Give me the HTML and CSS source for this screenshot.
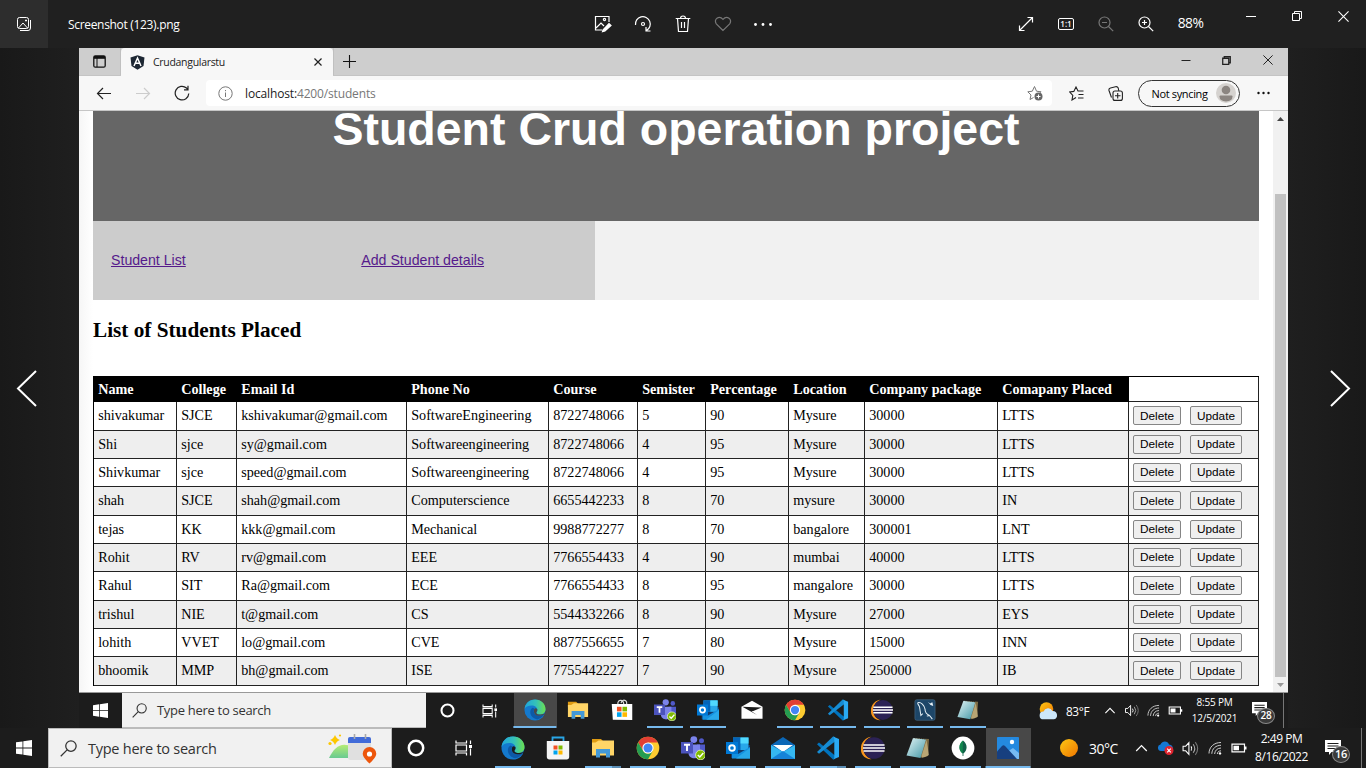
FILE: index.html
```html
<!DOCTYPE html>
<html lang="en">
<head>
<meta charset="utf-8">
<title>Photos - Screenshot (123).png</title>
<link rel="stylesheet" href="styles.css">
</head>
<body>
<svg class="defs" width="0" height="0">
  <defs>
    <linearGradient id="gEdge" x1="0" y1="0" x2="1" y2="0"><stop offset="0" stop-color="#1fa5dc"/><stop offset=".55" stop-color="#35c1b8"/><stop offset="1" stop-color="#6ce04e"/></linearGradient>
    <linearGradient id="gSun" x1="0" y1="0" x2="1" y2="1"><stop offset="0" stop-color="#ffc814"/><stop offset="1" stop-color="#ee7500"/></linearGradient>
    <linearGradient id="gNote" x1="0" y1="0" x2="1" y2="1"><stop offset="0" stop-color="#e4f6f7"/><stop offset="1" stop-color="#4196a5"/></linearGradient>
    <linearGradient id="gHill" x1="0" y1="0" x2="0" y2="1"><stop offset="0" stop-color="#b5ec74"/><stop offset="1" stop-color="#69ca91"/></linearGradient>
  </defs>
  <symbol id="win" viewBox="0 0 16 16"><path fill="#fff" d="M0 2.3 6.5 1.4V7.6H0ZM7.3 1.3 16 0V7.6H7.3ZM0 8.4H6.5V14.6L0 13.7ZM7.3 8.4H16V16L7.3 14.7Z"/></symbol>
  <symbol id="search" viewBox="0 0 16 16"><g fill="none" stroke="currentColor" stroke-width="1.2"><circle cx="10.3" cy="5.7" r="4.9"/><path d="M6.7 9.3.7 15.3"/></g></symbol>
  <symbol id="cortana" viewBox="0 0 16 16"><circle cx="8" cy="8" r="6.4" fill="none" stroke="#fff" stroke-width="2.2"/></symbol>
  <symbol id="taskview" viewBox="0 0 18 16"><path fill="none" stroke="#fff" stroke-width="1.2" d="M1 .5V3H11.500V.5M1 15.500V13H11.500V15.500M1 5H11.500V11H1ZM15.500 .5V4M15.500 8.500V15.500"/><path fill="#fff" d="M14 5h3v3h-3z"/></symbol>
  <symbol id="edge" viewBox="0 0 24 24"><circle cx="12" cy="12" r="11.500" fill="#1479cd"/><path fill="url(#gEdge)" d="M.6 11C1 5 5.600.5 12 .5c7 0 11.500 5 11.500 10.400 0 4-3 6-6 6-2.500 0-4-.8-4-1.600 0-.6 1.100-1.100 1.100-3.200 0-3-2.700-5-6.200-5C4.600 7.100 1.500 8.600.6 11Z"/><path fill="#0d59a7" d="M9.500 9.500C5 12 6 20.500 14.500 22.300c3.500-.7 6-3 7.300-5.300-3.500 2-9 1.500-10.600-1.500-1-2-.6-3.700.2-5Z"/><path class="edge-gap" d="M11.300 11c-1.500 3.700.6 7.500 5.500 7.300 2.700-.1 4.800-1 5.500-1.600.5-.4.1-.7-.4-.5-3.400 1.300-8.500.8-8.500-1.300 0-.8 1.200-1.500 1.200-3.200 0-.9-2.200-2.600-3.300-.7ZM22.600 15.300 25 11v9l-3-1.500Z"/></symbol>
  <symbol id="store" viewBox="0 0 24 24"><path fill="none" stroke="#29a5e6" stroke-width="1.800" d="M6.500 5.500V1.500h11V5"/><path fill="#f5f5f5" d="M.8 5h22.400v16c0 1.500-1 2.500-2.500 2.500H3.300C1.800 23.500.8 22.500.8 21Z"/><path fill="#f25022" d="M7.500 9.500h4v4h-4z"/><path fill="#7fba00" d="M12.500 9.500h4v4h-4z"/><path fill="#00a4ef" d="M7.500 14.500h4v4h-4z"/><path fill="#ffb900" d="M12.500 14.500h4v4h-4z"/></symbol>
  <symbol id="store10" viewBox="0 0 24 24"><path fill="none" stroke="#ddd" stroke-width="1.300" d="M7.500 6.500C7 2.500 9 1 11 1.500S14 4 14 6.500M11 4.500C11.500 1.500 14 .5 16 2s1 3 1 4.500"/><path fill="#fff" d="M.8 5.500h22.400v17.300L2 22.500Z"/><path fill="#f25022" d="M6.500 8.500h5v5h-5z"/><path fill="#7fba00" d="M12.500 8.500h5v5h-5z"/><path fill="#00a4ef" d="M6.500 14.500h5v5h-5z"/><path fill="#ffb900" d="M12.500 14.500h5v5h-5z"/></symbol>
  <symbol id="folder" viewBox="0 0 24 24"><path fill="#df9b13" d="M1 3h9l2.500 2.500H22V9H1Z"/><path fill="#ffd567" d="M1 6.500h3.500L7.500 4.500H23V19.500H1Z"/><path fill="#4399d8" d="M5 13h14v8.500h-4V17.500H9v4H5Z"/></symbol>
  <symbol id="chrome" viewBox="0 0 24 24"><circle cx="12" cy="12" r="11.300" fill="#fdcb30"/><path fill="#e23f33" d="M2.200 6.400A11.300 11.300 0 0 1 21.800 6.400H12L7.200 14.800Z"/><path fill="#259c51" d="M2.200 6.400A11.300 11.300 0 0 0 12 23.300L16.900 14.800A5.600 5.600 0 0 1 7.100 14.800Z"/><circle cx="12" cy="12" r="5.600" fill="#fff"/><circle cx="12" cy="12" r="4.500" fill="#4285f4"/></symbol>
  <symbol id="teams" viewBox="0 0 24 24"><circle cx="20.500" cy="4.800" r="2.500" fill="#5059c9"/><circle cx="12.800" cy="3.600" r="3.400" fill="#7b83eb"/><path fill="#5059c9" d="M16 8.500h8v7a4 4 0 0 1-8 2Z"/><path fill="#7b83eb" d="M7.500 8.500h11.500v8.500c0 7-11.500 7-11.500 0Z"/><path fill="#4b53bc" d="M0 6h12v11.500H0Z"/><path fill="none" stroke="#fff" stroke-width="1.900" d="M3 8.800h6M6 8.800V15"/><circle cx="19.500" cy="19" r="4.900" fill="#7fba00" stroke="#e6f5c5" stroke-width=".8"/><path fill="none" stroke="#fff" stroke-width="1.500" d="m16.800 19 2 2 3.500-4"/></symbol>
  <symbol id="outlook" viewBox="0 0 24 24"><path fill="#123b6d" d="M5 9h19v13H5Z"/><path fill="#28a8ea" d="M7 1.500h15.500V14H7Z"/><path fill="#0364b8" d="M7 1.500h7.500V14H7Z"/><path fill="#50d9ff" d="M14.500 1.500h8v6h-8Z"/><path fill="#1490df" d="m24 11-12 7-6-3.500V22.500h18Z"/><path fill="#28a8ea" d="m24 12-14 10.500h14Z"/><path fill="#0078d4" d="M0 6h12v12H0Z"/><circle cx="6" cy="12" r="2.800" fill="none" stroke="#fff" stroke-width="1.900"/></symbol>
  <symbol id="mail" viewBox="0 0 24 24"><path fill="#0b67b7" d="M0 9 12 1l12 8v14H0Z"/><path fill="#fff" d="M2 9h20l-10 7Z"/><path fill="#35b8f1" d="m0 9 12 7 12-7v14H0Z"/><path fill="#1683d8" d="M0 23 12 15l12 8Z"/></symbol>
  <symbol id="mail10" viewBox="0 0 24 24"><path fill="#fff" d="M.5 8.500 12 2 23.500 8.500v13H.5Z"/><path fill="#1c1c1c" d="M1.500 8.500 22.500 9.300 13.500 13l-2 .3 6 4.200Z"/></symbol>
  <symbol id="vscode" viewBox="0 0 24 24"><path fill="#0073bd" d="M1 8.200 3 6.500 19 19.500V23L17 23.500Z"/><path fill="#168cd3" d="M1 16 17 .5l2 .5v4.500L3 17.700Z"/><path fill="#2aaaf3" d="m17 .5 6 2.500v18l-6 2.500c1-.5 1.300-1 1.300-2V2.500c0-1-.3-1.500-1.300-2Z"/></symbol>
  <symbol id="eclipse" viewBox="0 0 24 24"><path fill="#f7941e" d="M10.500.8C2 1.500-3 11.500 1.500 18.800c2 3 5.500 4.600 9 4.400C-1 19.500.5 4 10.500.8Z"/><circle cx="13" cy="12" r="10.800" fill="#2c2255"/><path stroke="#fff" stroke-width="1.500" d="M2.500 9h21M2 12h22M2.500 15h21"/></symbol>
  <symbol id="mysql" viewBox="0 0 24 24"><rect x="1" y=".8" width="22" height="22.400" rx="2" fill="#1d4668" stroke="#476b86" stroke-width=".7"/><path fill="none" stroke="#e9f2f7" stroke-width="1.100" d="M4 4c4-1 7 3 8 7 0 3 2 6 5 7l-3 .5M4 4c0 2 1.500 3 2 4.500L7.500 18l2-2M17 18l3 4"/><path fill="#e9f2f7" d="m15 3 2.500 2L20 3.500l1 4-3-1Z"/></symbol>
  <symbol id="notepad" viewBox="0 0 24 24"><path fill="#7c6a42" d="m8 2 15 1-1 17-6 2Z"/><path fill="url(#gNote)" d="M7 2 20 3.500 14.500 22 .5 19.500Z"/><path stroke="#222" stroke-width="1.200" stroke-dasharray="1 1.300" d="m7 1.500 13.500 1.500"/><path fill="#d8c58f" d="m20.500 4 2.500 15-4 2-4 .5Z" opacity=".65"/></symbol>
  <symbol id="mongo" viewBox="0 0 24 24"><circle cx="12" cy="12" r="11.400" fill="#fff"/><path fill="#116149" d="M12 4.500c5 4 4.500 10 .4 13V20h-.8v-2.500C7.500 14.500 7 8.500 12 4.500Z"/><path fill="#13aa52" d="M12 4.500c-5 4-4.500 10-.4 13Z" opacity=".55"/></symbol>
  <symbol id="photos" viewBox="0 0 24 24"><rect x="1" y="1" width="22" height="22" rx="1" fill="#2489df"/><path fill="#77baf2" d="M11 16 17 12l6 5v6H15Z"/><path fill="#173f7f" d="M1 15.500 6 10q1.500-1.500 3 0l12 13H1Z"/><circle cx="16" cy="6" r="2.200" fill="#fff"/></symbol>
  <symbol id="chev" viewBox="0 0 12 8"><path fill="none" stroke="#fff" stroke-width="1.200" d="M.7 7 6 1.500 11.300 7"/></symbol>
  <symbol id="speaker" viewBox="0 0 16 14"><path fill="none" stroke="#fff" d="M1 4.800h2.500L6.500 1.500v11L3.500 9.200H1ZM8.500 5q1.500 2 0 4"/><path fill="none" stroke="#aaa" d="M10.500 3q3 4 0 8"/><path fill="none" stroke="#777" d="M12.500 1q4.500 6 0 12"/></symbol>
  <symbol id="wifi" viewBox="0 0 14 14"><g fill="none" stroke="#ccc" stroke-width="1"><path d="M1 12.500C1 6 6 1.500 13 1.500"/><path d="M3.800 12.800C4 7.500 8 4.300 13 4.300"/><path d="M6.600 13C7 9.500 9 7.200 13 7"/><path d="M9.300 13C9.500 11 10.500 10 13 9.800"/></g><circle cx="12" cy="12.400" r="1.200" fill="#fff"/></symbol>
  <symbol id="battery" viewBox="0 0 16 10"><path fill="none" stroke="#fff" stroke-width="1.200" d="M1 1.200h12.500v7.600H1Z"/><path fill="#fff" d="M2.500 2.700h5.500v4.600H2.500ZM14 3.500h1.500v3H14Z"/></symbol>
  <symbol id="notif" viewBox="0 0 16 16"><path fill="#fff" d="M0 0h16v12H6.500L4 15V12H0Z"/><path stroke="#1c1c1c" stroke-width="1.200" d="M2.500 3.500h11M2.500 6h11M2.500 8.500h11"/></symbol>
  <symbol id="close" viewBox="0 0 10 10"><path fill="none" stroke="currentColor" d="m.4.4 9.200 9.200M9.600.4.4 9.600"/></symbol>
  <symbol id="restore" viewBox="0 0 10 10"><path fill="none" stroke="currentColor" d="M.5 2.500h7v7h-7ZM2.500 2.500v-2h7v7h-2"/></symbol>
  <symbol id="zoomglass" viewBox="0 0 16 16"><g fill="none" stroke="currentColor" stroke-width="1.200"><circle cx="6.500" cy="6.500" r="5.500"/><path d="m10.500 10.500 4.700 4.700M4 6.500h5"/></g></symbol>
</svg>

<div class="desktop">
  <header class="viewer-bar">
    <div class="viewer-home"><svg width="16" height="16" viewBox="0 0 16 16" fill="none" stroke="#fff"><rect x="1.500" y="1.500" width="11" height="11" rx="2"/><path d="M2.500 12 7 7l4.500 5M14.500 4v8q0 2.500-2.500 2.500H4M10 3.500v2M9 4.500h2"/></svg></div>
    <div class="viewer-title">Screenshot (123).png</div>
    <div class="viewer-tools">
      <div class="tool"><svg width="18" height="18" viewBox="0 0 18 18" fill="none" stroke="#fff" stroke-width="1.200"><path d="M8 15H1.500V1.500H15V7M2 13l5-5 3 3"/><circle cx="10.500" cy="4.500" r="1.100"/><path fill="#fff" d="m9 15 6-6.500 2 2L11 16l-2.500.7Z"/></svg></div>
      <div class="tool"><svg width="18" height="18" viewBox="0 0 18 18" fill="none" stroke="#fff" stroke-width="1.200"><path d="M1.500 10A7.400 7.400 0 1 1 12.500 15.500M12 12v4h4.500"/><circle cx="9" cy="9" r="1.500"/></svg></div>
      <div class="tool"><svg width="16" height="18" viewBox="0 0 16 18" fill="none" stroke="#fff" stroke-width="1.200"><path d="M.7 3.500h14.600M5.500 3.500q0-2.500 2.500-2.500t2.500 2.500M2.500 3.500l1 13h9l1-13M6.500 7v6M9.500 7v6"/></svg></div>
      <div class="tool"><svg width="18" height="16" viewBox="0 0 18 16" fill="none" stroke="#777" stroke-width="1.200"><path d="m9 14.500-6.700-6.700C-.8 3.500 5-1 9 3.300 13-1 18.800 3.500 15.700 7.800Z"/></svg></div>
      <div class="tool"><svg width="20" height="6" viewBox="0 0 20 6" fill="#fff"><circle cx="2.500" cy="3.500" r="1.400"/><circle cx="10" cy="3.500" r="1.400"/><circle cx="17.500" cy="3.500" r="1.400"/></svg></div>
    </div>
    <div class="viewer-zoom">
      <div class="tool"><svg width="16" height="16" viewBox="0 0 16 16" fill="none" stroke="#fff" stroke-width="1.200"><path d="M1.500 14.500l13-13M9.500 1.500h5v5M1.500 9.500v5h5"/></svg></div>
      <div class="tool"><span class="ratio">1:1</span></div>
      <div class="tool dim"><svg width="16" height="16"><use href="#zoomglass"/></svg></div>
      <div class="tool"><svg width="16" height="16" viewBox="0 0 16 16"><use href="#zoomglass"/><path stroke="#fff" stroke-width="1.200" d="M6.500 4v5"/></svg></div>
      <div class="percent">88%</div>
    </div>
    <div class="viewer-win">
      <div><svg width="10" height="10" viewBox="0 0 10 10"><path stroke="#fff" d="M0 5.500h10"/></svg></div>
      <div><svg width="10" height="10"><use href="#restore"/></svg></div>
      <div><svg width="11" height="11"><use href="#close"/></svg></div>
    </div>
  </header>

  <main class="viewer">
    <div class="side prev"><svg width="22" height="38" viewBox="0 0 22 38"><path fill="none" stroke="#fff" stroke-width="2" d="M20 2 2 19.500 20 37"/></svg></div>
    <div class="shot">
      <div class="tabs">
        <div class="tab-menu"><svg width="13" height="13" viewBox="0 0 13 13"><rect x=".8" y=".8" width="11.400" height="11.400" rx="1.500" fill="none" stroke="#111" stroke-width="1.300"/><path fill="#111" d="M1 1h11v2.800H1Z"/><path stroke="#111" d="M4 3v9"/></svg></div>
        <div class="tab">
          <svg width="15" height="15" viewBox="0 0 15 15"><path fill="#1d2733" d="M7.500.3 14.500 2.500 13.500 11l-6 3.700-6-3.700L.5 2.500Z"/><path fill="none" stroke="#fff" stroke-width="1.500" d="m4 11 3.500-8L11 11M5.300 8.300h4.400"/></svg>
          <span>Crudangularstu</span>
          <svg class="tab-x" width="8" height="8" viewBox="0 0 10 10"><path fill="none" stroke="#222" stroke-width="1.500" d="m.6.6 8.800 8.800M9.400.6.6 9.400"/></svg>
        </div>
        <div class="tab-new"><svg width="13" height="13" viewBox="0 0 13 13"><path stroke="#111" stroke-width="1.100" d="M0 6.500h13M6.500 0v13"/></svg></div>
        <div class="browser-win">
          <div><svg width="10" height="10" viewBox="0 0 10 10"><path stroke="#222" d="M.5 5.500h9"/></svg></div>
          <div><svg width="9" height="9" viewBox="0 0 10 10"><path fill="none" stroke="#222" stroke-width="1.400" d="M.8 2.500h6.700v6.700H.8ZM2.500 2.500V.8h6.700v6.700H7.500"/></svg></div>
          <div><svg width="10" height="10"><use href="#close"/></svg></div>
        </div>
      </div>
      <div class="toolbar">
        <div class="nav-btn"><svg width="16" height="13" viewBox="0 0 16 13" fill="none" stroke="#222" stroke-width="1.200"><path d="M15 6.500H1.500M7 1 1.500 6.500 7 12"/></svg></div>
        <div class="nav-btn"><svg width="16" height="13" viewBox="0 0 16 13" fill="none" stroke="#ccc" stroke-width="1.200"><path d="M1 6.500h13.500M9 1l5.500 5.500L9 12"/></svg></div>
        <div class="nav-btn"><svg width="16" height="16" viewBox="0 0 16 16" fill="none" stroke="#222" stroke-width="1.200"><path d="M14.800 8.500A6.800 6.800 0 1 1 12.500 3L14 4.500M14 .8v4h-4"/></svg></div>
        <div class="address">
          <svg width="15" height="15" viewBox="0 0 15 15" fill="none" stroke="#777"><circle cx="7.500" cy="7.500" r="6.700"/><path d="M7.500 6.500v4.500M7.500 4v1.200"/></svg>
          <span class="url">localhost:<i>4200/students</i></span>
          <svg class="fav" width="16" height="16" viewBox="0 0 16 16" fill="none" stroke="#777"><path d="M6.500 12.500 3 14.500l1-4.500L.8 6.800l4.500-.6L7.500 1.500l2 4.700 4.500.6-1 1"/><circle cx="11.500" cy="11.500" r="4" fill="#666" stroke="none"/><path stroke="#fff" d="M9.500 11.500h4M11.500 9.500v4"/></svg>
        </div>
        <div class="tb-cell"><svg width="15" height="15" viewBox="0 0 15 15" fill="none" stroke="#222" stroke-width="1.100"><path d="m7 11.500-4 2.500.8-4.700L.8 6l4-.6L7 1l2 4h5.500M9.500 8.500h5M9 12h5.500"/></svg></div>
        <div class="tb-cell"><svg width="15" height="15" viewBox="0 0 15 15" fill="none" stroke="#222" stroke-width="1.100"><rect x="5" y="5" width="9.400" height="9.400" rx="2"/><path d="M3.500 11.500 1 4.500Q.5 2.500 2.500 2L7.500.7Q9.500.3 10.200 2l.6 3M9.700 7v5.500M7 9.700h5.500"/></svg></div>
        <div class="sync"><span>Not syncing</span><svg width="20" height="20" viewBox="0 0 20 20"><circle cx="10" cy="10" r="10" fill="#d5d2cf"/><circle cx="10" cy="7" r="4.300" fill="#8b8581"/><path fill="#8b8581" d="M3.500 13.500q0-1 1-1h11q1 0 1 1 0 4.500-6.500 5-6.500-.5-6.500-5Z"/></svg></div>
        <div class="more"><svg width="13" height="4" viewBox="0 0 13 4" fill="#111"><circle cx="1.500" cy="2" r="1.200"/><circle cx="6.500" cy="2" r="1.200"/><circle cx="11.500" cy="2" r="1.200"/></svg></div>
      </div>

      <div class="page">
        <div class="content">
          <div class="banner"><h1>Student Crud operation project</h1></div>
          <nav class="menu"><div class="links"><a href="#">Student List</a><a href="#">Add Student details</a></div></nav>
          <h2>List of Students Placed</h2>
          <table>
            <colgroup><col class="c83"><col class="c60"><col class="c170"><col class="c142"><col class="c89"><col class="c68"><col class="c83"><col class="c76"><col class="c133"><col class="c131"><col class="c130"></colgroup>
            <thead><tr><th>Name</th><th>College</th><th>Email Id</th><th>Phone No</th><th>Course</th><th>Semister</th><th>Percentage</th><th>Location</th><th>Company package</th><th>Comapany Placed</th><td></td></tr></thead>
            <tbody>
              <tr><td>shivakumar</td><td>SJCE</td><td>kshivakumar@gmail.com</td><td>SoftwareEngineering</td><td>8722748066</td><td>5</td><td>90</td><td>Mysure</td><td>30000</td><td>LTTS</td><td><div class="actions"><button>Delete</button><button>Update</button></div></td></tr>
              <tr><td>Shi</td><td>sjce</td><td>sy@gmail.com</td><td>Softwareengineering</td><td>8722748066</td><td>4</td><td>95</td><td>Mysure</td><td>30000</td><td>LTTS</td><td><div class="actions"><button>Delete</button><button>Update</button></div></td></tr>
              <tr><td>Shivkumar</td><td>sjce</td><td>speed@gmail.com</td><td>Softwareengineering</td><td>8722748066</td><td>4</td><td>95</td><td>Mysure</td><td>30000</td><td>LTTS</td><td><div class="actions"><button>Delete</button><button>Update</button></div></td></tr>
              <tr><td>shah</td><td>SJCE</td><td>shah@gmail.com</td><td>Computerscience</td><td>6655442233</td><td>8</td><td>70</td><td>mysure</td><td>30000</td><td>IN</td><td><div class="actions"><button>Delete</button><button>Update</button></div></td></tr>
              <tr><td>tejas</td><td>KK</td><td>kkk@gmail.com</td><td>Mechanical</td><td>9988772277</td><td>8</td><td>70</td><td>bangalore</td><td>300001</td><td>LNT</td><td><div class="actions"><button>Delete</button><button>Update</button></div></td></tr>
              <tr><td>Rohit</td><td>RV</td><td>rv@gmail.com</td><td>EEE</td><td>7766554433</td><td>4</td><td>90</td><td>mumbai</td><td>40000</td><td>LTTS</td><td><div class="actions"><button>Delete</button><button>Update</button></div></td></tr>
              <tr><td>Rahul</td><td>SIT</td><td>Ra@gmail.com</td><td>ECE</td><td>7766554433</td><td>8</td><td>95</td><td>mangalore</td><td>30000</td><td>LTTS</td><td><div class="actions"><button>Delete</button><button>Update</button></div></td></tr>
              <tr><td>trishul</td><td>NIE</td><td>t@gmail.com</td><td>CS</td><td>5544332266</td><td>8</td><td>90</td><td>Mysure</td><td>27000</td><td>EYS</td><td><div class="actions"><button>Delete</button><button>Update</button></div></td></tr>
              <tr><td>lohith</td><td>VVET</td><td>lo@gmail.com</td><td>CVE</td><td>8877556655</td><td>7</td><td>80</td><td>Mysure</td><td>15000</td><td>INN</td><td><div class="actions"><button>Delete</button><button>Update</button></div></td></tr>
              <tr><td>bhoomik</td><td>MMP</td><td>bh@gmail.com</td><td>ISE</td><td>7755442227</td><td>7</td><td>90</td><td>Mysure</td><td>250000</td><td>IB</td><td><div class="actions"><button>Delete</button><button>Update</button></div></td></tr>
            </tbody>
          </table>
        </div>
        <div class="scrollbar">
          <svg width="7" height="4" viewBox="0 0 7 4"><path fill="#444" d="M0 4 3.500 0 7 4Z"/></svg>
          <div class="thumb"></div>
          <svg width="7" height="4" viewBox="0 0 7 4"><path fill="#999" d="M0 0h7L3.500 4Z"/></svg>
        </div>
      </div>

      <div class="taskbar inner">
        <div class="start"><svg width="15" height="15"><use href="#win"/></svg></div>
        <div class="searchbox"><svg width="15" height="15"><use href="#search"/></svg><span>Type here to search</span></div>
        <div class="sys"><svg width="15" height="15"><use href="#cortana"/></svg></div>
        <div class="sys tv"><svg width="16" height="14"><use href="#taskview"/></svg></div>
        <div class="apps">
          <div class="app open active"><svg><use href="#edge"/></svg></div>
          <div class="app"><svg><use href="#folder"/></svg></div>
          <div class="app"><svg><use href="#store10"/></svg></div>
          <div class="app open"><svg><use href="#teams"/></svg></div>
          <div class="app open"><svg><use href="#outlook"/></svg></div>
          <div class="app"><svg><use href="#mail10"/></svg></div>
          <div class="app open"><svg><use href="#chrome"/></svg></div>
          <div class="app open"><svg><use href="#vscode"/></svg></div>
          <div class="app open"><svg><use href="#eclipse"/></svg></div>
          <div class="app open"><svg><use href="#mysql"/></svg></div>
          <div class="app open"><svg><use href="#notepad"/></svg></div>
        </div>
        <div class="tray">
          <div class="weather"><svg width="20" height="18" viewBox="0 0 20 18"><circle cx="8.500" cy="7" r="6.800" fill="url(#gSun)"/><path fill="#cce7fa" d="M5.500 17.300a3.900 3.900 0 0 1 0-7.800 5 5 0 0 1 9-.6 4.300 4.300 0 0 1 1.500 8.400Z"/></svg></div>
          <div class="temp">83°F</div>
          <div class="t"><svg width="12" height="7"><use href="#chev"/></svg></div>
          <div class="t"><svg width="16" height="13"><use href="#speaker"/></svg></div>
          <div class="t"><svg width="13" height="13"><use href="#wifi"/></svg></div>
          <div class="t"><svg width="15" height="9"><use href="#battery"/></svg></div>
          <div class="clock"><div>8:55 PM</div><div>12/5/2021</div></div>
          <div class="notice"><svg width="15" height="15"><use href="#notif"/></svg><span class="badge">28</span></div>
          <div class="peek"></div>
        </div>
      </div>
    </div>
    <div class="side next"><svg width="22" height="38" viewBox="0 0 22 38"><path fill="none" stroke="#fff" stroke-width="2" d="m2 2 18 17.500L2 37"/></svg></div>
  </main>

  <footer class="taskbar outer">
    <div class="start"><svg width="16" height="16"><use href="#win"/></svg></div>
    <div class="searchbox"><svg width="17" height="17"><use href="#search"/></svg><span>Type here to search</span>
      <svg class="highlight" width="50" height="30" viewBox="0 0 50 30"><path fill="url(#gHill)" d="M1 24C6 13 14 7 24 13v11Z"/><path fill="#fdc700" d="M7 1q1.500 4 5 5-3.500 1-5 5-1.500-4-5-5 3.500-1 5-5Z"/><circle cx="12" cy="1.500" r="1.100" fill="#fdc700"/><circle cx="2" cy="9.500" r="1.600" fill="#fdc700"/><rect x="20" y="3" width="23" height="23" rx="2.500" fill="#e0e0e0"/><path fill="#416bd8" d="M20 9V5q0-2 2-2h19q2 0 2 2v4Z"/><path stroke="#aaa" stroke-width="1.600" d="M26.500 0v5M37.500 0v5"/><path fill="#ed560c" d="M41.500 13a6.800 6.800 0 0 1 6.800 6.800c0 4-6.800 9.700-6.800 9.700s-6.800-5.700-6.800-9.700a6.800 6.800 0 0 1 6.800-6.800Z"/><circle cx="41.500" cy="20" r="2.600" fill="#fff"/></svg>
    </div>
    <div class="sys"><svg width="18" height="18"><use href="#cortana"/></svg></div>
    <div class="sys tv"><svg width="18" height="16"><use href="#taskview"/></svg></div>
    <div class="apps">
      <div class="app open"><svg><use href="#edge"/></svg></div>
      <div class="app"><svg><use href="#store"/></svg></div>
      <div class="app open multi"><svg><use href="#folder"/></svg></div>
      <div class="app open"><svg><use href="#chrome"/></svg></div>
      <div class="app open"><svg><use href="#teams"/></svg></div>
      <div class="app open"><svg><use href="#outlook"/></svg></div>
      <div class="app open"><svg><use href="#mail"/></svg></div>
      <div class="app open multi"><svg><use href="#vscode"/></svg></div>
      <div class="app open"><svg><use href="#eclipse"/></svg></div>
      <div class="app open"><svg><use href="#notepad"/></svg></div>
      <div class="app open"><svg><use href="#mongo"/></svg></div>
      <div class="app open active"><svg><use href="#photos"/></svg></div>
    </div>
    <div class="tray">
      <div class="weather"><svg width="18" height="18" viewBox="0 0 18 18"><circle cx="9" cy="9" r="9" fill="url(#gSun)"/></svg></div>
      <div class="temp">30°C</div>
      <div class="t"><svg width="13" height="8"><use href="#chev"/></svg></div>
      <div class="t"><svg width="17" height="14" viewBox="0 0 17 14"><path fill="#1478d4" d="M4 10a3.300 3.300 0 0 1-.5-6.500C5-.5 11-.5 12 3.500c3.500.3 4.500 3 3.500 6.500Z"/><circle cx="12" cy="9.500" r="4.500" fill="#e0242f"/><path stroke="#fff" stroke-width="1.200" d="m10.200 7.700 3.600 3.600m0-3.600-3.600 3.600"/></svg></div>
      <div class="t"><svg width="17" height="15"><use href="#speaker"/></svg></div>
      <div class="t"><svg width="14" height="14"><use href="#wifi"/></svg></div>
      <div class="t"><svg width="16" height="10"><use href="#battery"/></svg></div>
      <div class="clock"><div>2:49 PM</div><div>8/16/2022</div></div>
      <div class="notice"><svg width="16" height="16"><use href="#notif"/></svg><span class="badge">16</span></div>
      <div class="peek"></div>
    </div>
  </footer>
</div>
</body>
</html>
```

FILE: styles.css
```css
* { box-sizing: border-box; }
body { margin: 0; overflow: hidden; font-family: "Open Sans", "Noto Sans", sans-serif; }
svg { display: block; flex: none; }
.defs { position: absolute; }
.edge-gap { fill: var(--gap, #1c1c1c); }
.desktop { width: 1366px; height: 768px; display: flex; flex-direction: column; background: #1a1a1a; }

/* photo viewer title bar */
.viewer-bar { height: 48px; display: flex; background: #202020; color: #fff; }
.viewer-home { width: 48px; display: flex; align-items: center; justify-content: center; background: #2d2d2d; }
.viewer-title { width: 535px; padding-left: 20px; line-height: 49px; font-size: 12px; letter-spacing: -.32px; white-space: nowrap; }
.viewer-tools { width: 423px; display: flex; }
.viewer-zoom { width: 222px; display: flex; }
.tool { width: 40px; display: flex; align-items: center; justify-content: center; }
.dim { color: #777; }
.ratio { width: 16px; height: 12px; border: 1px solid #fff; border-radius: 2px; font-size: 8px; line-height: 9.500px; font-weight: 600; text-align: center; }
.percent { width: 49px; text-align: center; font-size: 13.800px; letter-spacing: -.5px; line-height: 46px; }
.viewer-win { display: flex; height: 32px; }
.viewer-win div { width: 46px; display: flex; align-items: center; justify-content: center; }

.viewer { height: 680px; display: flex; }
.side { display: flex; align-items: center; }
.prev { width: 79px; padding-left: 16px; background: linear-gradient(to right, #191919, #1f1f1f); }
.next { width: 78px; padding-left: 41px; background: linear-gradient(to right, #1f1f1f, #191919); }
.shot { width: 1209px; display: flex; flex-direction: column; }

/* browser chrome */
.tabs { height: 28px; display: flex; background: #cecece; border-bottom: 1px solid #c4c4c4; color: #222; }
.tab-menu { width: 42px; display: flex; align-items: center; justify-content: center; border-right: 1px solid #c0c0c0; }
.tab { width: 212px; height: 28px; display: flex; align-items: center; padding: 0 11px 0 9px; gap: 8px; background: #f7f7f7; border-radius: 4px 4px 0 0; font-size: 10.500px; }
.tab span { letter-spacing: -.3px; }
.tab-x { margin-left: auto; }
.tab-new { width: 31px; display: flex; align-items: center; justify-content: center; border-left: 1px solid #c0c0c0; }
.browser-win { margin-left: auto; display: flex; }
.browser-win div { width: 40.700px; display: flex; align-items: center; justify-content: center; padding-bottom: 3px; }
.toolbar { height: 35px; display: flex; align-items: center; padding-left: 5px; background: #f7f7f7; border-bottom: 1px solid #c6c6c6; }
.nav-btn { width: 39px; display: flex; justify-content: center; }
.address { width: 846px; height: 26px; margin-left: 5px; padding: 0 9px 0 12px; display: flex; align-items: center; background: #fff; border-radius: 4px; }
.url { margin-left: 12px; font-size: 12px; letter-spacing: -.15px; color: #222; }
.url i { font-style: normal; color: #777; }
.fav { margin-left: auto; }
.tb-cell { width: 39px; margin-left: 5px; display: flex; justify-content: center; }
.tb-cell + .tb-cell { margin-left: 0; }
.sync { width: 102px; height: 27px; margin-left: 3px; padding: 0 3px 0 12.500px; display: flex; align-items: center; justify-content: space-between; border: 1px solid #333; border-radius: 14px; font-size: 11px; letter-spacing: -.35px; white-space: nowrap; }
.more { width: 46px; display: flex; justify-content: center; }

/* student page */
.page { height: 581px; display: flex; background: linear-gradient(to right, #f6f6f6, #fff 14px); overflow: hidden; }
.content { width: 1194px; padding: 0 14px; }
.banner { height: 110px; background: #666; overflow: hidden; }
h1 { margin: -9px 0 0; font: bold 46.500px/54px "Liberation Sans", Arial, sans-serif; color: #fff; text-align: center; }
.menu { height: 79px; background: #f1f1f1; }
.links { width: 502px; height: 79px; padding: 0 18px 2px; display: flex; align-items: center; background: #ccc; }
.links a { flex: none; margin-right: 175.500px; font: 14.160px "Liberation Sans", Arial, sans-serif; color: #551a8b; }
.links a:last-child { margin-right: 0; }
h2 { margin: 17px 0 33px; font: bold 21.240px/26px "Liberation Serif", "Times New Roman", serif; color: #000; }
table { width: 1166px; table-layout: fixed; border-collapse: separate; border-spacing: 0; border-left: 1px solid #000; border-top: 1px solid #000; font: 14.160px/16px "Liberation Serif", "Times New Roman", serif; color: #000; }
.c83 { width: 83px; } .c60 { width: 60px; } .c170 { width: 170px; } .c142 { width: 142px; } .c89 { width: 89px; } .c68 { width: 68px; }
.c76 { width: 76px; } .c133 { width: 133px; } .c131 { width: 131px; } .c130 { width: 130px; }
th, td { padding: 0 0 1px 4.200px; height: 28px; border-right: 1px solid #222; border-bottom: 1px solid #222; text-align: left; vertical-align: middle; white-space: nowrap; }
thead th, thead td { height: 25px; }
th { background: #000; color: #fff; border-color: #000; }
tbody tr:nth-child(3n+1) td { height: 29px; }
tbody td { padding-bottom: 2px; }
tbody tr:nth-child(even) { background: #eee; }
tbody td:last-child { padding: 0 0 1px 4px; }
.actions { display: flex; gap: 9px; }
button { height: 19px; padding: 0; width: 48px; border: 1px solid #858585; border-radius: 2px; background: #efefef; font: 11.800px "Liberation Sans", Arial, sans-serif; color: #000; }
button + button { width: 52px; }
.scrollbar { width: 15px; padding: 6px 0 5px; display: flex; flex-direction: column; align-items: center; background: #f1f1f1; }
.thumb { width: 11px; height: 483px; margin: 73px 0 6px; background: #c1c1c1; }

/* taskbars */
.taskbar { display: flex; background: #1c1c1c; color: #fff; }
.taskbar > div, .tray > div { display: flex; align-items: center; justify-content: center; }
.taskbar .searchbox { justify-content: flex-start; background: #f1f1f1; color: #333; white-space: nowrap; }
.taskbar .apps { align-items: stretch; justify-content: flex-start; }
.app { position: relative; display: flex; align-items: center; justify-content: center; }
.open::after { content: ""; position: absolute; left: 50%; bottom: 0; width: 36px; height: 2px; transform: translateX(-50%); background: #76b9ed; }
.multi::after { background: linear-gradient(to right, #76b9ed 27px, #5b8db4 27px); }
.active { --gap: #484848; background: #484848; }
.active::after { width: 100%; }
.taskbar .tray { margin-left: auto; align-items: stretch; }
.tray .clock { flex-direction: column; white-space: nowrap; }
.notice { position: relative; }
.badge { position: absolute; border: 1px solid #888; border-radius: 50%; background: #3a3a3a; text-align: center; font-weight: 600; letter-spacing: -.3px; }
.tray > .peek { border-left: 1px solid #777; }

.inner { height: 36px; border-top: 1px solid #999; }
.inner .start { width: 43px; padding-right: 1px; }
.inner .searchbox { width: 304px; padding-left: 10px; border-bottom: 1px solid #bbb; font-size: 13px; letter-spacing: -.3px; }
.inner .searchbox span { margin-left: 10px; }
.inner .sys { width: 43px; }
.inner .tv { width: 44.500px; padding-right: 3px; }
.inner .app { width: 43.330px; }
.inner .app svg { width: 22px; height: 22px; }
.inner .app { padding-bottom: 1px; }
.inner .weather { width: 30px; }
.inner .temp { width: 30px; font-size: 11.800px; letter-spacing: -.3px; }
.inner .t { width: 21.600px; }
.inner .temp + .t { margin-left: 7px; }
.inner .clock { width: 57px; padding-bottom: 2px; font-size: 10px; line-height: 16px; letter-spacing: -.2px; }
.inner .notice { width: 40px; padding-right: 8px; padding-bottom: 2px; }
.inner .badge { left: 14px; top: 15px; width: 18px; height: 16px; font-size: 10px; line-height: 13px; }
.inner .peek { width: 5px; }

.outer { height: 40px; }
.outer .start { width: 48px; }
.outer .searchbox { width: 344px; padding: 0 13px 0 11px; border: 1px solid #bbb; font-size: 14.500px; }
.outer .searchbox span { margin-left: 11px; letter-spacing: -.25px; }
.outer .highlight { margin-left: auto; margin-top: 2px; }
.outer .sys { width: 48px; }
.outer .tv { width: 50.500px; padding-right: 2px; }
.outer .app { width: 45px; }
.outer .app svg { width: 24px; height: 24px; }
.outer .weather { width: 36px; }
.outer .temp { width: 34px; font-size: 14px; letter-spacing: -.5px; }
.outer .t { width: 24.300px; }
.outer .temp + .t { margin-left: 9px; }
.outer .clock { width: 61px; font-size: 12px; line-height: 18px; letter-spacing: -.45px; }
.outer .notice { width: 49px; padding-right: 8px; }
.outer .badge { left: 20px; top: 18px; width: 18px; height: 17px; font-size: 11px; line-height: 14px; }
.outer .peek { width: 5px; }
```
